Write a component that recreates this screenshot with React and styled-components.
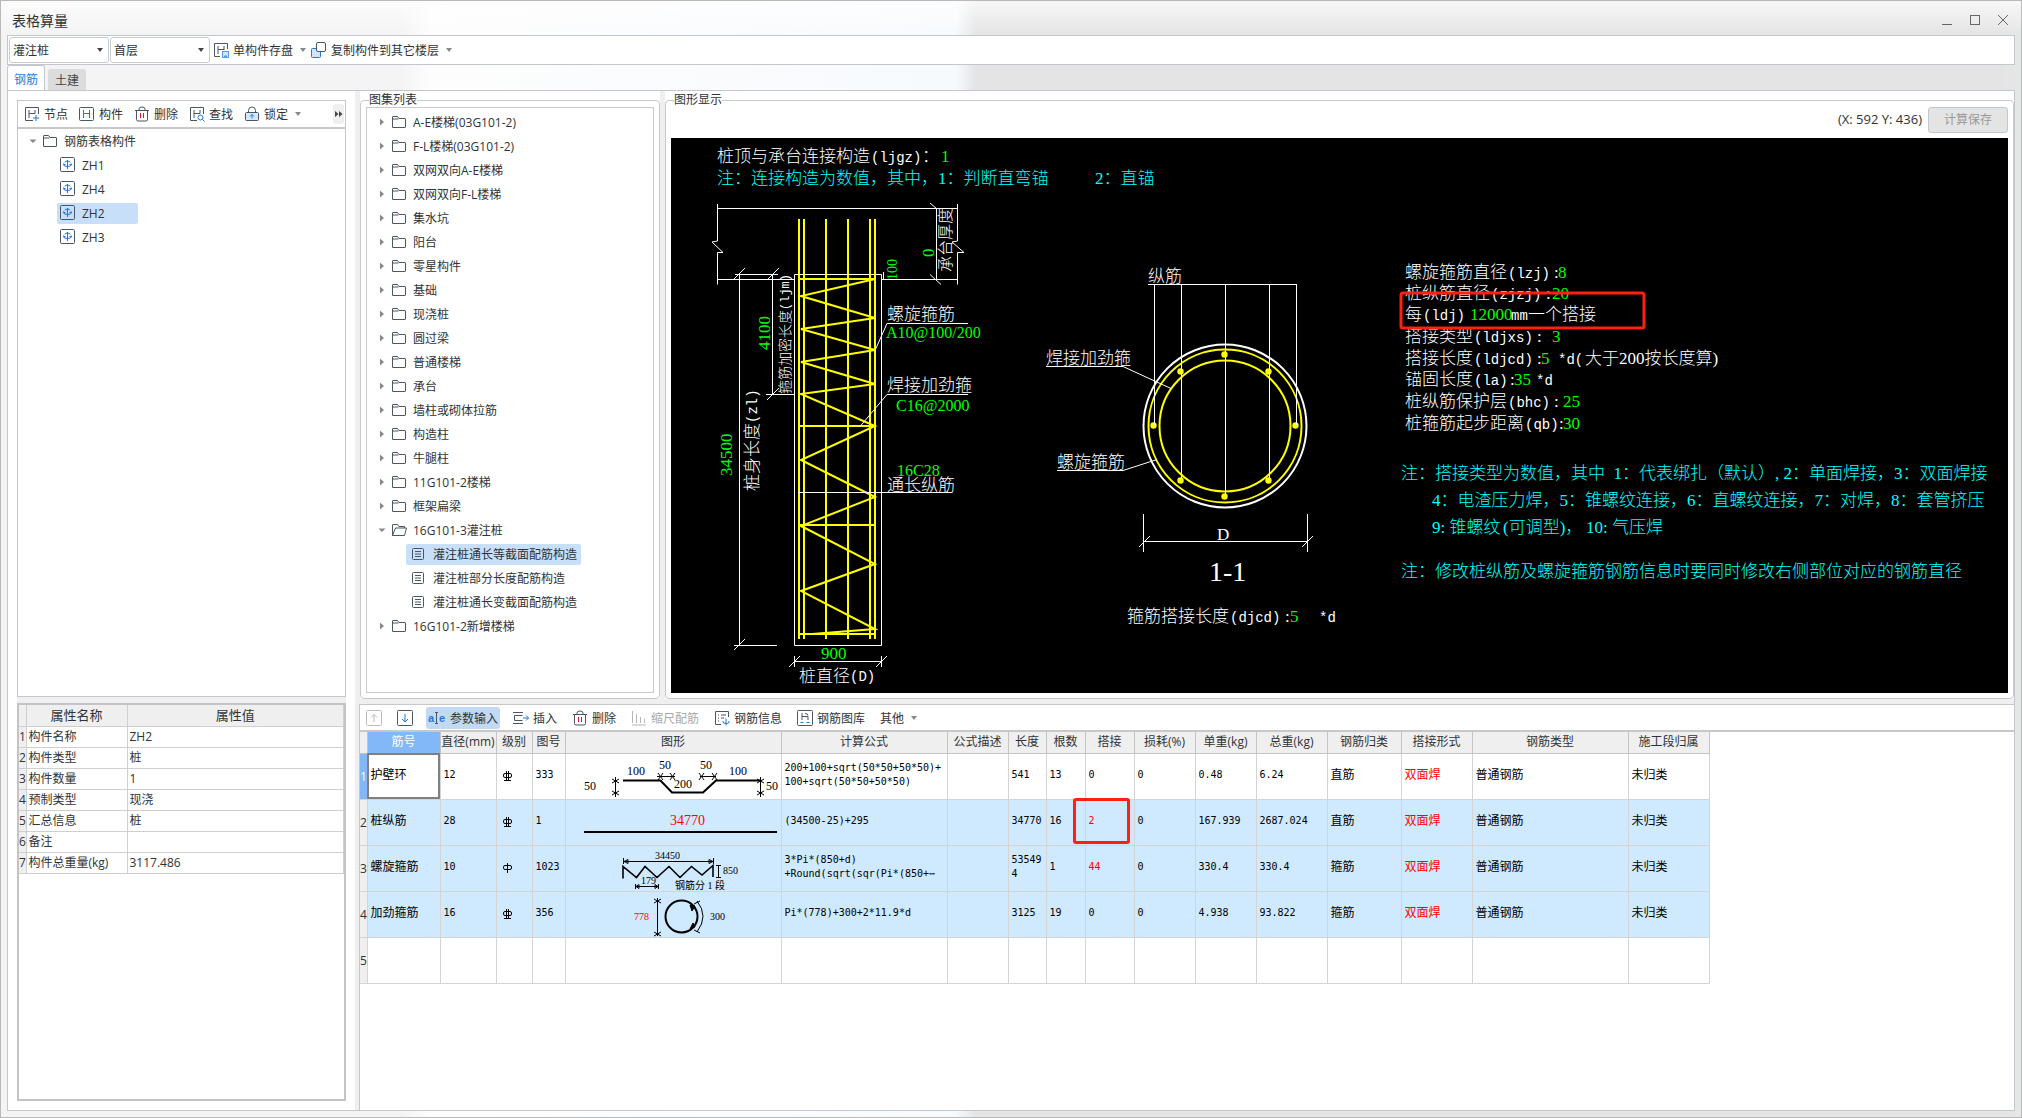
import React, { useState } from "react";
import styled, { createGlobalStyle } from "styled-components";

const GlobalStyle = createGlobalStyle`
  * {
    box-sizing: border-box;
  }
  body {
    margin: 0;
    font-family: "Open Sans", "Noto Sans CJK SC", sans-serif;
    font-size: 12px;
    color: #2f3338;
  }
  button, select {
    font: inherit;
    color: inherit;
  }
`;

const Window = styled.div`
  min-height: 100vh;
  display: flex;
  flex-direction: column;
  padding: 0 6px 6px;
  border: 1px solid #b9b9b9;
  background: linear-gradient(
    90deg,
    #f4f4f4 0,
    #f4f4f4 400px,
    #fdfdfd 430px,
    #f7fafd 955px,
    #e4e4e4 975px,
    #e4e4e4 99%,
    #e4e8e4 100%
  );
`;

const TitleBar = styled.header`
  display: flex;
  align-items: center;
  justify-content: space-between;
  height: 34px;
  margin: 0 -6px;
  padding: 4px 12px 0 11px;
  background: linear-gradient(rgba(255, 255, 255, 0.7), transparent);
`;

const Title = styled.h1`
  margin: 0;
  font-size: 14px;
  font-weight: 400;
`;

const WindowButtons = styled.div`
  display: flex;
  gap: 16px;
`;

const WindowButton = styled.button`
  display: flex;
  padding: 0;
  border: 0;
  background: none;
  color: #666;
`;

const MainToolbar = styled.div`
  display: flex;
  align-items: center;
  gap: 1px;
  height: 30px;
  padding: 0 1px;
  border: 1px solid #c3c7cd;
  background: #fff;
`;

const SelectBox = styled.label`
  display: flex;
  align-items: center;
  width: 100px;
  height: 26px;
  padding-right: 5px;
  border: 1px solid #c9cdd2;
  border-radius: 3px;
  background: #fff;
`;

const Select = styled.select`
  flex: 1;
  min-width: 0;
  padding: 0 0 0 3px;
  border: 0;
  appearance: none;
  background: none;
  outline: none;
`;

const ToolButton = styled.button`
  display: flex;
  align-items: center;
  flex: none;
  gap: 4px;
  height: 22px;
  padding: 0 2px;
  border: 0;
  border-radius: 3px;
  white-space: nowrap;
  background: ${({ $active }) => ($active ? "#c1d9f3" : "none")};
  color: ${({ disabled }) => (disabled ? "#a9a9a9" : "#2f3338")};
`;

const MenuCaret = styled.span`
  display: flex;
  margin-left: 3px;
`;

const Tabs = styled.div`
  display: flex;
  align-items: flex-end;
  gap: 3px;
  height: 25px;
`;

const Tab = styled.button`
  height: ${({ $active }) => ($active ? 26 : 21)}px;
  margin-bottom: ${({ $active }) => ($active ? -1 : 0)}px;
  padding: 0 6px;
  border: 1px solid ${({ $active }) => ($active ? "#c3c7cd" : "#dcdcdc")};
  border-bottom: 0;
  border-radius: 3px 3px 0 0;
  background: ${({ $active }) => ($active ? "#fff" : "#dcdcdc")};
  color: ${({ $active }) => ($active ? "#1a7ee0" : "#444")};
`;

const Pane = styled.main`
  flex: 1;
  display: flex;
  gap: 5px;
  border: 1px solid #c3c7cd;
  background: #efefef;
`;

const LeftColumn = styled.div`
  flex: none;
  display: flex;
  flex-direction: column;
  width: 347px;
  padding: 9px;
  background: #fff;
`;

const ComponentBox = styled.section`
  flex: 1;
  border: 1px solid #c4c8cc;
`;

const ComponentToolbar = styled.div`
  display: flex;
  align-items: center;
  gap: 7px;
  height: 28px;
  padding: 0 1px 0 4px;
  border-bottom: 2px solid #c8c8c8;
`;

const MoreButton = styled.button`
  display: flex;
  align-items: center;
  justify-content: center;
  width: 11px;
  height: 20px;
  margin-left: auto;
  padding: 0;
  border: 0;
  border-radius: 3px;
  background: #efefef;
`;

const LeftGutter = styled.div`
  height: 6px;
  background: #efefef;
`;

const PropertyBox = styled.section`
  flex: 0 0 398px;
  border: 2px solid #c4c4c8;
`;

const PropertyTable = styled.table`
  width: 100%;
  table-layout: fixed;
  border-collapse: collapse;

  th,
  td {
    height: 21px;
    padding: 0 2px;
    border: 1px solid #cfcfcf;
    border-left: 0;
    border-top: 0;
    line-height: 16px;
    font-weight: 400;
    text-align: left;
    white-space: nowrap;
  }
  thead th {
    font-size: 13px;
    text-align: center;
    background: #efefef;
  }
  tbody th {
    padding: 0;
    background: #efefef;
  }
`;

const Tree = styled.ul`
  margin: 0;
  padding: ${({ $top }) => $top}px 0 0 11px;
  list-style: none;
`;

const TreeRow = styled.li`
  display: flex;
  align-items: center;
  height: 24px;
  padding-left: ${({ $child }) => ($child ? 28 : 0)}px;
`;

const TreeItem = styled.button`
  display: flex;
  align-items: center;
  gap: 6px;
  height: 21px;
  min-width: ${({ $wide }) => ($wide ? 81 : 0)}px;
  padding: 0 4px 0 ${({ $wide }) => ($wide ? 3 : 5)}px;
  border: 0;
  border-radius: 2px;
  white-space: nowrap;
  background: ${({ $selected }) => ($selected ? "#c8dffa" : "none")};
`;

const RightColumn = styled.div`
  flex: 1;
  min-width: 0;
  display: flex;
  flex-direction: column;
  gap: 5px;
`;

const TopRow = styled.div`
  display: flex;
  gap: 5px;
`;

const GroupCell = styled.div`
  flex: ${({ $width }) => ($width ? `none` : "1")};
  width: ${({ $width }) => ($width ? `${$width}px` : "auto")};
  min-width: 0;
  display: flex;
  padding-top: 2px;
  background: #fff;
`;

const Group = styled.fieldset`
  flex: 1;
  min-width: 0;
  margin: 0;
  padding: 0 5px 5px;
  border: 1px solid #c9c9c9;
  border-radius: 4px;
`;

const GroupTitle = styled.legend`
  margin-left: 3px;
  padding: 0;
  line-height: 14px;
`;

const AtlasBox = styled.div`
  height: 100%;
  border: 1px solid #c9c9c9;
`;

const CanvasHeader = styled.div`
  display: flex;
  align-items: flex-start;
  justify-content: flex-end;
  gap: 6px;
  height: 31px;
  line-height: 24px;
`;

const Position = styled.span`
  font-size: 13px;
`;

const SaveButton = styled.button`
  width: 80px;
  height: 26px;
  padding: 0;
  border: 1px solid #bfc7d3;
  border-radius: 3px;
  background: #e4e4e4;
  color: #999;
`;

const Canvas = styled.div`
  overflow: hidden;
  background: #000;

  svg {
    display: block;
  }
`;

const DetailPanel = styled.section`
  flex: 1;
  border-top: 1px solid #c4c8cc;
  border-left: 1px solid #c4c8cc;
  margin-left: -1px;
  background: #fff;
`;

const DetailToolbar = styled.div`
  display: flex;
  align-items: center;
  gap: 11px;
  height: 27px;
  padding: 0 4px;
  border-bottom: 2px solid #c8c8c8;
`;

const DetailTable = styled.table`
  width: 1349px;
  table-layout: fixed;
  border-collapse: collapse;

  th,
  td {
    padding: 0;
    border-right: 1px solid #d4d4d4;
    border-bottom: 1px solid #d4d4d4;
    font-weight: 400;
    text-align: left;
  }
  thead th {
    height: 21px;
    line-height: 16px;
    text-align: center;
    white-space: nowrap;
    background: #efefef;
    border-color: #c4c4c4;
  }
`;

const NameHead = styled.th`
  && {
    background: #82b8f8;
    color: #fff;
  }
`;

const DetailRow = styled.tr`
  height: 46px;
  background: ${({ $blue }) => ($blue ? "#cfe9ff" : "#fff")};
`;

const RowNumber = styled.th`
  background: ${({ $current }) => ($current ? "#82b8f8" : "#efefef")};
  color: ${({ $current }) => ($current ? "#fff" : "#2f3338")};
`;

const DetailCell = styled.td`
  && {
    position: relative;
    height: 46px;
    padding: ${({ $drawing }) => ($drawing ? 0 : "0 0 3px 3px")};
    line-height: 14px;
    font-family: "Liberation Serif", "Noto Sans CJK SC", serif;
    white-space: pre;
    color: ${({ $red }) => ($red ? "#f00" : "#000")};
    outline: ${({ $focused }) => ($focused ? "2px solid #808080" : "none")};
    outline-offset: -2px;
  }
  svg {
    display: block;
  }
`;

const FigureCell = styled(DetailCell)`
  && {
    font-family: "DejaVu Sans Mono", monospace;
    font-size: 10px;
  }
`;

const CellMark = styled.span`
  position: absolute;
  z-index: 1;
  top: -2px;
  left: -13px;
  width: 57px;
  height: 46px;
  border: 3px solid #ff2010;
  border-radius: 3px;
`;

const Caret = ({ color = "#888" }) => (
  <svg width="6" height="4" viewBox="0 0 6 4">
    <path d="M0 0h6L3 4z" fill={color} />
  </svg>
);

const INK = "#4b5563";
const BLUE = "#1f78e0";

const glyphs = {
  node: (
    <>
      <path d="M9 14.5H1.5V1.5h13V8" stroke={INK} />
      <path d="M5 4v8M5 7.5h6M11 4v3.5" stroke={INK} />
      <path d="M12 9v6M9 12h6" stroke={BLUE} />
    </>
  ),
  part: (
    <>
      <rect x="0.5" y="1.5" width="14" height="13" rx="1" stroke={INK} />
      <path d="M4.5 4v8M10.5 4v8M4.5 7.5h6" stroke={BLUE} />
    </>
  ),
  trash: (
    <>
      <path d="M1 4.5h14M5 4V3q0-2 3-2t3 2v1M2.5 4.5v9q0 1.5 1.5 1.5h8q1.5 0 1.5-1.5v-9" stroke={INK} />
      <path d="M6.5 7v5M9.5 7v5" stroke="#e02020" />
    </>
  ),
  find: (
    <>
      <path d="M8 14.5H1.5V1.5h13V8M5 4v8M5 7.5h6M11 4v3.5" stroke={INK} />
      <circle cx="11.5" cy="11.5" r="2.5" stroke={BLUE} />
      <path d="M13.3 13.3L15.5 15.5" stroke={BLUE} />
    </>
  ),
  lock: (
    <>
      <path d="M4.5 6V4.5a3.5 3.500 0 0 1 7 0V6" stroke={INK} />
      <rect x="1.5" y="6.5" width="13" height="8" rx="1" fill="#d5e8fd" stroke={INK} />
      <path d="M8 8.5v4M6 10.5l2-2 2 2" stroke={BLUE} />
    </>
  ),
  save: (
    <>
      <path d="M7 14.5H1.5V1.5h13V7M5 4v8M5 7.5h6M11 4v4" stroke={INK} />
      <rect x="9.5" y="9.5" width="6" height="6" fill="#cfe3fb" stroke="#5b9be8" />
      <path d="M11 13.5h3v2h-3z" fill="#5b9be8" />
    </>
  ),
  copy: (
    <>
      <rect x="0.5" y="6.5" width="9" height="9" rx="1" fill="#cfe3fb" stroke={BLUE} />
      <rect x="5.5" y="0.5" width="9" height="9" rx="1.5" fill="#fff" stroke={INK} />
    </>
  ),
  up: (
    <>
      <rect x="0.5" y="0.5" width="15" height="15" rx="1" stroke="#bbb" />
      <path d="M8 12V4.500M5 7.500l3-3 3 3" stroke="#bbb" />
    </>
  ),
  down: (
    <>
      <rect x="0.5" y="0.5" width="15" height="15" rx="1" stroke={INK} />
      <path d="M8 4v8M5 9l3 3 3-3" stroke={BLUE} />
    </>
  ),
  insert: (
    <>
      <path d="M0 2.500h10M0 13.500h10M9.500 5.500H1.500v5h8" stroke={INK} />
      <path d="M10 8h5.500M13 5.500l2.500 2.500-2.500 2.500" stroke={BLUE} />
    </>
  ),
  scale: <path d="M1.500 1v12M5.500 4v9M9.500 7v6M13.500 9v4M1 15h14" stroke="#b5b5b5" />,
  info: (
    <>
      <path d="M7 14.500H1.500V1.500h13V7M4 5h1M7 5h5M4 8h1M7 8h3M4 11h1" stroke={INK} />
      <path d="M12 8.500v7M9 11v1q0 1.500 3 1.500t3-1.500v-1" stroke={BLUE} />
    </>
  ),
  library: (
    <>
      <rect x="0.5" y="0.5" width="15" height="15" rx="1" stroke={INK} />
      <path d="M5 3v7M5 6.500h6V10M8 3.500q3 0 3 2" stroke={INK} />
      <path d="M3.500 12.500h3M9.500 12.500h3" stroke={BLUE} />
    </>
  ),
  member: (
    <>
      <rect x="0.5" y="0.5" width="14" height="14" rx="1" stroke={INK} />
      <path d="M7.500 3v9M3.500 6.500v1q0 2 4 2t4-2v-1M5.500 7.500h-2M11.500 7.500h-2M5 5.500q0-1.500 2.500-1.500t2.500 1.500" stroke={BLUE} />
    </>
  ),
  folder: <path d="M1.500 13.500V3q0-.5.5-.5h4.500L8 4.500h6q.5 0 .5.5v8q0 .5-.5.5zM1.500 5h6" stroke={INK} />,
  folderOpen: <path d="M1.500 13.500V3q0-.5.5-.5h4.500L8 4.500h5.500V6M1.500 13.500L4.500 6h11l-2 7.500z" stroke={INK} />,
  sheet: (
    <>
      <rect x="1.500" y="2.500" width="11" height="11" rx="1" stroke={INK} />
      <path d="M4 5.500h6M4 8h6M4 10.500h6" stroke={INK} />
    </>
  ),
};

const Icon = ({ name }) => (
  <svg width="16" height="16" viewBox="0 0 16 16" fill="none">
    {glyphs[name]}
  </svg>
);

const ParamIcon = () => (
  <svg width="18" height="16" viewBox="0 0 18 16" fill="none">
    <text x="0" y="12" fontSize="11" fontWeight="700" fontFamily="Liberation Sans" fill={BLUE}>a</text>
    <path d="M7 2.500h3M8.500 2.500v11M7 13.500h3" stroke={INK} />
    <text x="11" y="12" fontSize="11" fontWeight="700" fontFamily="Liberation Sans" fill={BLUE}>e</text>
  </svg>
);

const Arrow = ({ open }) => (
  <svg width="8" height="8" viewBox="0 0 8 8">
    <path d={open ? "M0.5 2.500h7L4 6z" : "M2 0.5L6 4 2 7.500z"} fill="#888" />
  </svg>
);

const atlas = [
  "A-E楼梯(03G101-2)",
  "F-L楼梯(03G101-2)",
  "双网双向A-E楼梯",
  "双网双向F-L楼梯",
  "集水坑",
  "阳台",
  "零星构件",
  "基础",
  "现浇桩",
  "圆过梁",
  "普通楼梯",
  "承台",
  "墙柱或砌体拉筋",
  "构造柱",
  "牛腿柱",
  "11G101-2楼梯",
  "框架扁梁",
  {
    name: "16G101-3灌注桩",
    children: ["灌注桩通长等截面配筋构造", "灌注桩部分长度配筋构造", "灌注桩通长变截面配筋构造"],
  },
  "16G101-2新增楼梯",
];

const properties = [
  ["构件名称", "ZH2"],
  ["构件类型", "桩"],
  ["构件数量", "1"],
  ["预制类型", "现浇"],
  ["汇总信息", "桩"],
  ["备注", ""],
  ["构件总重量(kg)", "3117.486"],
];

const CAD_FONT = '"Liberation Serif", "Noto Sans CJK SC", serif';
const GREEN = "#00ff00";
const CYAN = "#00ffff";

const Cad = ({ x, y, size = 17, fill = "#fff", turned, children }) => (
  <text
    x={x}
    y={y}
    fontSize={size}
    fontFamily={CAD_FONT}
    fontWeight="300"
    fill={fill}
    transform={turned ? `rotate(-90 ${x} ${y})` : undefined}
    style={{ whiteSpace: "pre" }}
  >
    {children}
  </text>
);

// Variable names such as (ldj) are set in the narrow monospace face
const Code = ({ x, y, size = 14, turned, children }) => (
  <text
    x={x}
    y={y}
    fontSize={size}
    fontFamily="Liberation Mono, monospace"
    fill="#fff"
    transform={turned ? `rotate(-90 ${x} ${y})` : undefined}
  >
    {children}
  </text>
);

const PileElevation = () => (
  <g fill="none">
    <g stroke="#fff">
      <path d="M717 208.5H958M717.5 204v37l-5.5 1 11 10.5h-5.5v32M717 279.5h77M881 279.5h77" />
      <path d="M957.5 204v37l-5.5 1 12 10.5h-6.5v32M936.5 208v72M930 203l7 6M930 274.5l11 10" />
      <path d="M739.5 274v372M772.5 274v121M735 274.5h43M733 280l12-12M767 280l12-12M766 394.5h28M767 400l12-12" />
      <path d="M794.5 274.5h87v371h-87zM883.5 272v7M734 645.5h43M734 650l11-11" />
      <path d="M794 661.5h88M794.5 656v11M881.5 656v11M789 667l11-11M876 667l11-11" />
    </g>
    <g stroke="#ff0" strokeWidth="2">
      <path d="M799 219v420M804 219v420M826 219v420M848 219v420M870 219v420M875 219v420" />
      <path d="M798 279h78M798 426h78M798 525h78M798 634h78" />
      <path d="M875 279L801 296l74 22-74 11 74 21-74 12 74 22-74 10 74 32-74 34 74 37-74 29 74 38-74 27 74 38-63 5" />
    </g>
    <g stroke="#fff">
      <path d="M968 323.5h-81l-12 27M968 394.5h-81l-27 32M798 492.5h154" />
    </g>
  </g>
);

const dots = [
  [1224.5, 354.5], [1180.5, 371.5], [1268.5, 371.5], [1153.5, 425.5],
  [1295.5, 425.5], [1180.5, 480.5], [1268.5, 480.5], [1224.5, 496.5],
];

const PileSection = () => (
  <g fill="none">
    <circle cx="1225" cy="426" r="81.5" stroke="#fff" strokeWidth="2" />
    <circle cx="1225" cy="426" r="76.5" stroke="#ff0" strokeWidth="2" />
    <circle cx="1225" cy="426" r="65.5" stroke="#ff0" strokeWidth="2" />
    {dots.map(([x, y]) => (
      <circle key={`${x}-${y}`} cx={x} cy={y} r="3.2" fill="#ff0" />
    ))}
    <g stroke="#fff">
      <path d="M1148 284.5h149M1154.5 284v141M1181.5 284v194M1225.5 284v212M1269.5 284v194M1296.5 284v141" />
      <path d="M1046 366.5h77l48 22M1057 470.5h66l34-11" />
      <path d="M1143.5 514v38M1307.5 514v38M1143 541.5h165M1139 547l11-11M1302 547l11-11" />
    </g>
  </g>
);

const params = [
  { y: 278, label: "螺旋箍筋直径", code: ["(lzj)", 1508], colon: 1554, value: ["8", 1558] },
  { y: 299, label: "桩纵筋直径", code: ["(zjzj)", 1491], colon: 1546, value: ["20", 1552] },
  { y: 320, label: "每", code: ["(ldj)", 1423], value: ["12000", 1470] },
  { y: 342, label: "搭接类型", code: ["(ldjxs)", 1474], colon: 1537, value: ["3", 1552] },
  { y: 364, label: "搭接长度", code: ["(ldjcd)", 1474], colon: 1537, value: ["5", 1541] },
  { y: 385, label: "锚固长度", code: ["(la)", 1474], colon: 1510, value: ["35", 1514] },
  { y: 407, label: "桩纵筋保护层", code: ["(bhc)", 1508], colon: 1554, value: ["25", 1563] },
  { y: 429, label: "桩箍筋起步距离", code: ["(qb)", 1525], colon: 1559, value: ["30", 1563] },
];

const PileDrawing = () => (
  <svg width="1337" height="555" viewBox="671 138 1337 555">
    <PileElevation />
    <PileSection />

    <Cad x={717} y={162}>桩顶与承台连接构造</Cad>
    <Code x={871} y={162}>(ljgz)</Code>
    <Cad x={922} y={162}>：</Cad>
    <Cad x={941} y={162} fill={GREEN}>1</Cad>
    <Cad x={717} y={184} fill={CYAN}>注：连接构造为数值，其中，1：判断直弯锚</Cad>
    <Cad x={1095} y={184} fill={CYAN}>2：直锚</Cad>

    <Cad x={951} y={272} size={16} turned>承台厚度</Cad>
    <Cad x={934} y={257} fill={GREEN} turned>0</Cad>
    <Cad x={897} y={280} size={14} fill={GREEN} turned>100</Cad>
    <Cad x={770} y={350} fill={GREEN} turned>4100</Cad>
    <Cad x={790} y={394} size={14} turned>箍筋加密长度</Cad>
    <Code x={789} y={310} size={12} turned>(ljm)</Code>
    <Cad x={732} y={476} fill={GREEN} turned>34500</Cad>
    <Cad x={758} y={491} turned>桩身长度</Cad>
    <Code x={757} y={423} turned>(zl)</Code>

    <Cad x={887} y={320}>螺旋箍筋</Cad>
    <Cad x={886} y={338} size={16} fill={GREEN}>A10@100/200</Cad>
    <Cad x={887} y={391}>焊接加劲箍</Cad>
    <Cad x={896} y={411} size={16} fill={GREEN}>C16@2000</Cad>
    <Cad x={897} y={476} size={16} fill={GREEN}>16C28</Cad>
    <Cad x={887} y={491}>通长纵筋</Cad>
    <Cad x={821} y={659} fill={GREEN}>900</Cad>
    <Cad x={799} y={682}>桩直径</Cad>
    <Code x={850} y={681}>(D)</Code>

    <Cad x={1148} y={282}>纵筋</Cad>
    <Cad x={1046} y={364}>焊接加劲箍</Cad>
    <Cad x={1057} y={468}>螺旋箍筋</Cad>
    <Cad x={1217} y={540}>D</Cad>
    <Cad x={1209} y={581} size={28}>1-1</Cad>
    <Cad x={1127} y={622}>箍筋搭接长度</Cad>
    <Code x={1230} y={622}>(djcd)</Code>
    <Cad x={1285} y={622}>:</Cad>
    <Cad x={1290} y={622} fill={GREEN}>5</Cad>
    <Code x={1319} y={622}>*d</Code>

    {params.map(({ y, label, code, colon, value }) => (
      <g key={label + code[0]}>
        <Cad x={1405} y={y}>{label}</Cad>
        <Code x={code[1]} y={y}>{code[0]}</Code>
        {colon && <Cad x={colon} y={y}>:</Cad>}
        <Cad x={value[1]} y={y} fill={GREEN}>{value[0]}</Cad>
      </g>
    ))}
    <Code x={1511} y={320}>mm</Code>
    <Cad x={1528} y={320}>一个搭接</Cad>
    <Code x={1558} y={364}>*d(</Code>
    <Cad x={1585} y={364}>大于200按长度算)</Cad>
    <Code x={1536} y={385}>*d</Code>
    <rect x="1401" y="293" width="243" height="35" rx="2" fill="none" stroke="#ff2010" strokeWidth="3" />

    <Cad x={1401} y={479} fill={CYAN}>注：搭接类型为数值，其中  1：代表绑扎（默认）, 2：单面焊接，3：双面焊接</Cad>
    <Cad x={1432} y={506} fill={CYAN}>4：电渣压力焊，5：锥螺纹连接，6：直螺纹连接，7：对焊，8：套管挤压</Cad>
    <Cad x={1432} y={533} fill={CYAN}>9: 锥螺纹</Cad>
    <Cad x={1503} y={533} fill={CYAN}>(可调型)，</Cad>
    <Cad x={1586} y={533} fill={CYAN}>10: 气压焊</Cad>
    <Cad x={1401} y={577} fill={CYAN}>注：修改桩纵筋及螺旋箍筋钢筋信息时要同时修改右侧部位对应的钢筋直径</Cad>
  </svg>
);

const Grade = ({ type }) => (
  <svg width="20" height="12" viewBox="0 0 20 12" fill="none" stroke="#000">
    <rect x="6.5" y="3.5" width="8" height="4" rx="1.5" />
    {type === "A" ? <path d="M10.5 1v10" /> : <path d="M9.5 1v9M11.5 1v9M7 10.5h7" />}
  </svg>
);

const Num = ({ x, y, size = 12, fill = "#000", children }) => (
  <text x={x} y={y} fontSize={size} fill={fill} stroke="none">
    {children}
  </text>
);

const shapes = {
  333: (
    <>
      <path d="M57 26.5H94.5L106 38.5H137L150 26.5H195" strokeWidth="2" />
      <path d="M49.5 23v20M46 25l7 4M53 25l-7 4M46 37l7 4M53 37l-7 4M194.5 23v20M191 25l7 4M198 25l-7 4M191 37l7 4M198 37l-7 4" />
      <path d="M91 22.5h18M92 19l5 7M97 19l-5 7M104 19l5 7M109 19l-5 7M134 22.5h16M133 19l5 7M138 19l-5 7M146 19l5 7M151 19l-5 7" />
      <Num x={18} y={36}>50</Num>
      <Num x={61} y={21}>100</Num>
      <Num x={93} y={15}>50</Num>
      <Num x={108} y={34}>200</Num>
      <Num x={134} y={15}>50</Num>
      <Num x={163} y={21}>100</Num>
      <Num x={200} y={36}>50</Num>
    </>
  ),
  1: (
    <>
      <path d="M18 32h193" strokeWidth="2" />
      <Num x={104} y={25} size={14} fill="#f00">34770</Num>
    </>
  ),
  1023: (
    <>
      <path d="M57 32.5V20.5l13.5 11 8.5-11 12 11 12-11 11 11 11.5-11 10.5 8.5 11-9.5V31" strokeWidth="1.6" />
      <path d="M57 15.5h91M57.5 12v6M147.5 12v6M58 15.5l4-2v4zM147 15.5l-4-2v4zM152.5 19v12M150 19.5h5M150 31.5h5" />
      <path d="M69 40.5h24M69.5 38v5M92.5 38v5M70 40.5l3-2v4zM92 40.5l-3-2v4z" />
      <Num x={89} y={13} size={10}>34450</Num>
      <Num x={157} y={28} size={10}>850</Num>
      <Num x={75} y={38} size={10}>179</Num>
      <Num x={109} y={43} size={10}>钢筋分 1 段</Num>
    </>
  ),
  356: (
    <>
      <path d="M91.5 6v38M88 7l7 4M95 7l-7 4M88 40l7 4M95 40l-7 4" />
      <circle cx="115.5" cy="24.5" r="16" strokeWidth="2" />
      <path d="M124 13l5 1-3 5zM124 37l5-2-2-4z" fill="#000" />
      <path d="M131 9q12 15 0 31M128 12l6-3M128 38l6 3" />
      <Num x={68} y={28} size={10} fill="#f00">778</Num>
      <Num x={144} y={28} size={10}>300</Num>
    </>
  ),
};

const RebarShape = ({ code }) => (
  <svg width="215" height="45" viewBox="0 0 215 45" fill="none" stroke="#000" fontFamily={CAD_FONT}>
    {shapes[code]}
  </svg>
);

const columns = [
  ["筋号", 73],
  ["直径(mm)", 56],
  ["级别", 36],
  ["图号", 33],
  ["图形", 216],
  ["计算公式", 166],
  ["公式描述", 61],
  ["长度", 38],
  ["根数", 39],
  ["搭接", 49],
  ["损耗(%)", 61],
  ["单重(kg)", 61],
  ["总重(kg)", 71],
  ["钢筋归类", 74],
  ["搭接形式", 71],
  ["钢筋类型", 156],
  ["施工段归属", 81],
];

const bars = [
  ["护壁环", "12", "C", "333", "200+100+sqrt(50*50+50*50)+\n100+sqrt(50*50+50*50)", "541", "13", "0", "0.48", "6.24", "直筋"],
  ["桩纵筋", "28", "C", "1", "(34500-25)+295", "34770", "16", "2", "167.939", "2687.024", "直筋"],
  ["螺旋箍筋", "10", "A", "1023", "3*Pi*(850+d)\n+Round(sqrt(sqr(Pi*(850+⋯", "53549\n4", "1", "44", "330.4", "330.4", "箍筋"],
  ["加劲箍筋", "16", "C", "356", "Pi*(778)+300+2*11.9*d", "3125", "19", "0", "4.938", "93.822", "箍筋"],
];

const BarRow = ({ index, bar }) => {
  const [name, diameter, grade, code, formula, length, count, laps, unit, total, kind] = bar;
  return (
    <DetailRow $blue={index > 0}>
      <RowNumber $current={index === 0}>{index + 1}</RowNumber>
      <DetailCell $focused={index === 0}>{name}</DetailCell>
      <FigureCell>{diameter}</FigureCell>
      <DetailCell $drawing><Grade type={grade} /></DetailCell>
      <FigureCell>{code}</FigureCell>
      <DetailCell $drawing><RebarShape code={code} /></DetailCell>
      <FigureCell>{formula}</FigureCell>
      <DetailCell />
      <FigureCell>{length}</FigureCell>
      <FigureCell>{count}</FigureCell>
      <FigureCell $red={laps !== "0"}>
        {laps}
        {laps === "2" && <CellMark />}
      </FigureCell>
      <FigureCell>0</FigureCell>
      <FigureCell>{unit}</FigureCell>
      <FigureCell>{total}</FigureCell>
      <DetailCell>{kind}</DetailCell>
      <DetailCell $red>双面焊</DetailCell>
      <DetailCell>普通钢筋</DetailCell>
      <DetailCell>未归类</DetailCell>
    </DetailRow>
  );
};

const ComponentTree = () => {
  const [selected, setSelected] = useState("ZH2");
  return (
    <Tree $top={0}>
      <TreeRow>
        <Arrow open />
        <TreeItem>
          <Icon name="folder" />
          钢筋表格构件
        </TreeItem>
      </TreeRow>
      {["ZH1", "ZH4", "ZH2", "ZH3"].map((name) => (
        <TreeRow key={name} $child>
          <TreeItem $wide $selected={name === selected} onClick={() => setSelected(name)}>
            <Icon name="member" />
            {name}
          </TreeItem>
        </TreeRow>
      ))}
    </Tree>
  );
};

const AtlasTree = () => {
  const [selected, setSelected] = useState("灌注桩通长等截面配筋构造");
  return (
    <Tree $top={2}>
      {atlas.map((entry) => {
        const name = entry.name || entry;
        return (
          <React.Fragment key={name}>
            <TreeRow>
              <Arrow open={Boolean(entry.children)} />
              <TreeItem>
                <Icon name={entry.children ? "folderOpen" : "folder"} />
                {name}
              </TreeItem>
            </TreeRow>
            {(entry.children || []).map((child) => (
              <TreeRow key={child} $child>
                <TreeItem $selected={child === selected} onClick={() => setSelected(child)}>
                  <Icon name="sheet" />
                  {child}
                </TreeItem>
              </TreeRow>
            ))}
          </React.Fragment>
        );
      })}
    </Tree>
  );
};

export default function App() {
  return (
    <Window>
      <GlobalStyle />
      <TitleBar>
        <Title>表格算量</Title>
        <WindowButtons>
          <WindowButton aria-label="最小化">
            <svg width="12" height="12" stroke="currentColor"><path d="M1 10.5h10" /></svg>
          </WindowButton>
          <WindowButton aria-label="最大化">
            <svg width="12" height="12" stroke="currentColor" fill="none"><rect x="1.5" y="1.5" width="9" height="9" /></svg>
          </WindowButton>
          <WindowButton aria-label="关闭">
            <svg width="12" height="12" stroke="currentColor"><path d="M1 1l10 10M11 1L1 11" /></svg>
          </WindowButton>
        </WindowButtons>
      </TitleBar>

      <MainToolbar>
        <SelectBox>
          <Select aria-label="构件类型"><option>灌注桩</option></Select>
          <Caret color="#444" />
        </SelectBox>
        <SelectBox>
          <Select aria-label="楼层"><option>首层</option></Select>
          <Caret color="#444" />
        </SelectBox>
        <ToolButton>
          <Icon name="save" />
          单构件存盘
          <MenuCaret><Caret /></MenuCaret>
        </ToolButton>
        <ToolButton>
          <Icon name="copy" />
          复制构件到其它楼层
          <MenuCaret><Caret /></MenuCaret>
        </ToolButton>
      </MainToolbar>

      <Tabs>
        <Tab $active>钢筋</Tab>
        <Tab>土建</Tab>
      </Tabs>

      <Pane>
        <LeftColumn>
          <ComponentBox>
            <ComponentToolbar>
              <ToolButton><Icon name="node" />节点</ToolButton>
              <ToolButton><Icon name="part" />构件</ToolButton>
              <ToolButton><Icon name="trash" />删除</ToolButton>
              <ToolButton><Icon name="find" />查找</ToolButton>
              <ToolButton>
                <Icon name="lock" />
                锁定
                <MenuCaret><Caret /></MenuCaret>
              </ToolButton>
              <MoreButton aria-label="更多">
                <svg width="8" height="6"><path d="M0 0l3.5 3L0 6zM4 0l3.5 3L4 6z" fill="#444" /></svg>
              </MoreButton>
            </ComponentToolbar>
            <ComponentTree />
          </ComponentBox>
          <LeftGutter />
          <PropertyBox>
            <PropertyTable>
              <colgroup>
                <col style={{ width: 7 }} />
                <col style={{ width: 101 }} />
                <col />
              </colgroup>
              <thead>
                <tr>
                  <th />
                  <th>属性名称</th>
                  <th>属性值</th>
                </tr>
              </thead>
              <tbody>
                {properties.map(([name, value], i) => (
                  <tr key={name}>
                    <th>{i + 1}</th>
                    <td>{name}</td>
                    <td>{value}</td>
                  </tr>
                ))}
              </tbody>
            </PropertyTable>
          </PropertyBox>
        </LeftColumn>

        <RightColumn>
          <TopRow>
            <GroupCell $width={300}>
              <Group>
                <GroupTitle>图集列表</GroupTitle>
                <AtlasBox>
                  <AtlasTree />
                </AtlasBox>
              </Group>
            </GroupCell>
            <GroupCell>
              <Group>
                <GroupTitle>图形显示</GroupTitle>
                <CanvasHeader>
                  <Position>(X: 592 Y: 436)</Position>
                  <SaveButton disabled>计算保存</SaveButton>
                </CanvasHeader>
                <Canvas>
                  <PileDrawing />
                </Canvas>
              </Group>
            </GroupCell>
          </TopRow>

          <DetailPanel>
            <DetailToolbar>
              <ToolButton disabled aria-label="上移"><Icon name="up" /></ToolButton>
              <ToolButton aria-label="下移"><Icon name="down" /></ToolButton>
              <ToolButton $active><ParamIcon />参数输入</ToolButton>
              <ToolButton><Icon name="insert" />插入</ToolButton>
              <ToolButton><Icon name="trash" />删除</ToolButton>
              <ToolButton disabled><Icon name="scale" />缩尺配筋</ToolButton>
              <ToolButton><Icon name="info" />钢筋信息</ToolButton>
              <ToolButton><Icon name="library" />钢筋图库</ToolButton>
              <ToolButton>
                其他
                <MenuCaret><Caret /></MenuCaret>
              </ToolButton>
            </DetailToolbar>
            <DetailTable>
              <colgroup>
                <col style={{ width: 7 }} />
                {columns.map(([name, width]) => (
                  <col key={name} style={{ width }} />
                ))}
              </colgroup>
              <thead>
                <tr>
                  <th />
                  {columns.map(([name], i) =>
                    i === 0 ? <NameHead key={name}>{name}</NameHead> : <th key={name}>{name}</th>
                  )}
                </tr>
              </thead>
              <tbody>
                {bars.map((bar, i) => (
                  <BarRow key={bar[0]} index={i} bar={bar} />
                ))}
                <DetailRow>
                  <RowNumber>5</RowNumber>
                  {columns.map(([name]) => (
                    <DetailCell key={name} />
                  ))}
                </DetailRow>
              </tbody>
            </DetailTable>
          </DetailPanel>
        </RightColumn>
      </Pane>
    </Window>
  );
}
